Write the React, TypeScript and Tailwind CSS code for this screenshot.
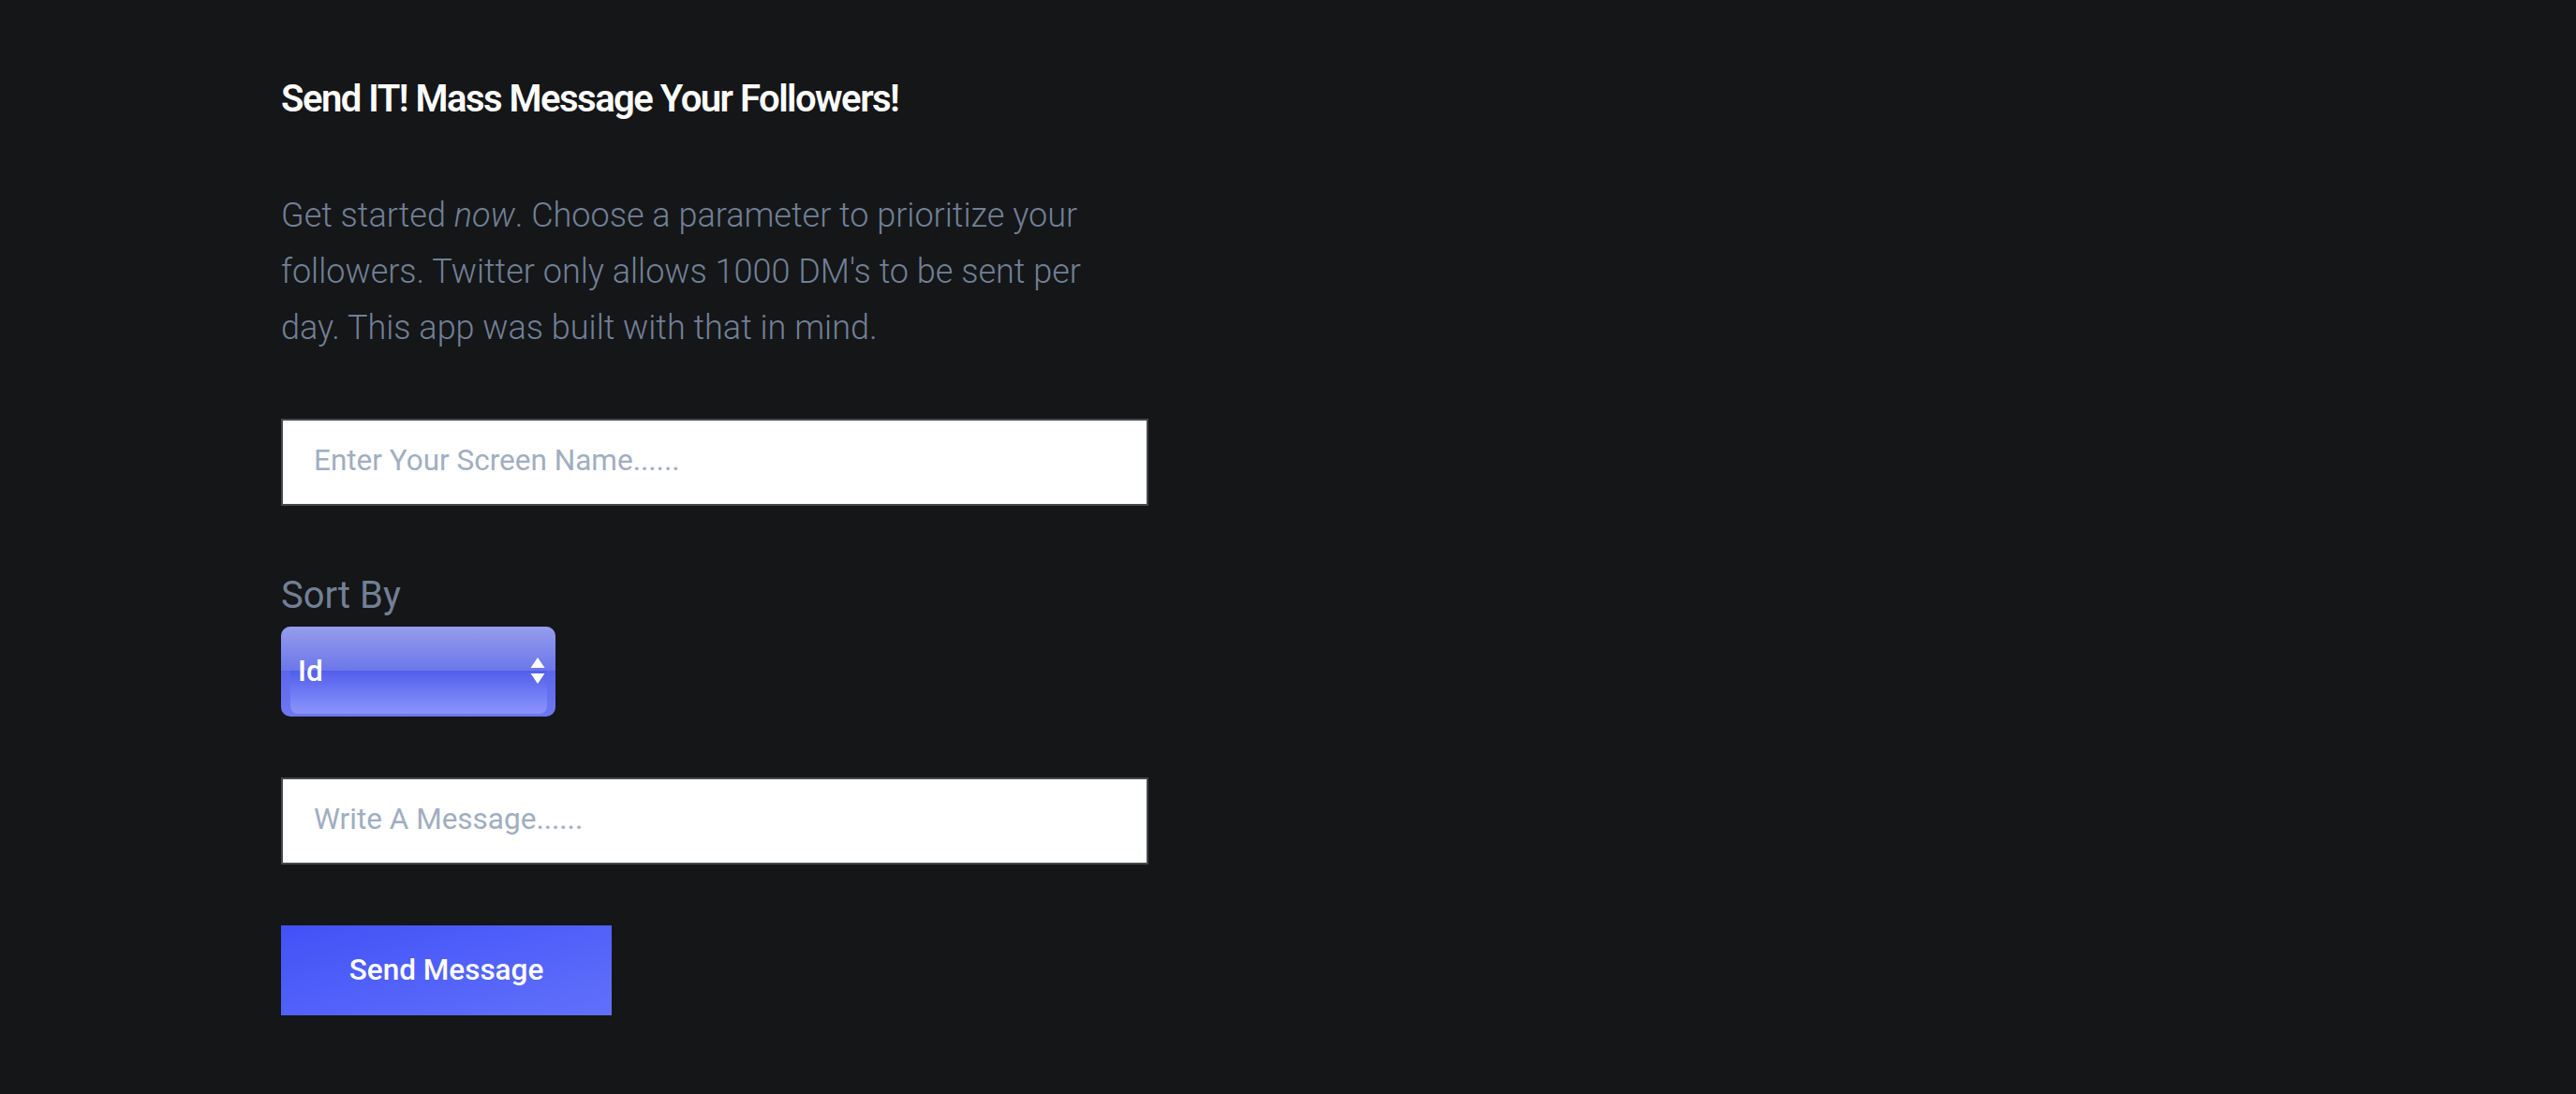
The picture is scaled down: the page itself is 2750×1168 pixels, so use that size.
import React from 'react';

const SortSelect: React.FC = () => {
  return (
    <div className="relative mt-[11px] w-[293px] h-[96px] rounded-[10px] overflow-hidden bg-gradient-to-b from-[#4a54e6] to-[#6f78f2]">
      <div className="absolute inset-x-0 top-0 h-[47px] bg-gradient-to-b from-[#969dec] to-[#6c76ea]"></div>
      <div className="absolute left-[10px] right-[9px] top-[47px] bottom-[3px] rounded-b-[8px] bg-gradient-to-b from-[#535eea] to-[#8c94fc]"></div>
      <div className="relative flex items-center justify-between h-full pl-[18px] pr-[11px]">
        <span className="text-[31.5px] font-medium text-white leading-none">Id</span>
        <svg width="16" height="28" viewBox="0 0 16 28" className="mb-[2px]">
          <polygon points="8,0 15.5,11 0.5,11" fill="#fff" />
          <polygon points="0.5,17 15.5,17 8,28" fill="#fff" />
        </svg>
      </div>
    </div>
  );
};

const TextField: React.FC<{ placeholder: string; className?: string }> = ({ placeholder, className }) => {
  return (
    <input
      type="text"
      placeholder={placeholder}
      className={`block w-[926px] h-[93px] bg-white border-2 border-[#434a4c] px-[33px] pb-[4px] text-[31.5px] text-[#2d3748] placeholder:text-[#a0aec0] outline-none ${className ?? ''}`}
      style={{ fontFamily: 'Roboto, "Liberation Sans", sans-serif' }}
    />
  );
};

export default function App() {
  return (
    <div
      className="min-h-screen bg-[#151618] pl-[300px] pt-[85px]"
      style={{ fontFamily: 'Roboto, "Liberation Sans", sans-serif' }}
    >
      <h1 className="text-[40px] leading-[42px] font-semibold tracking-[-1.5px] text-white">
        Send IT! Mass Message Your Followers!
      </h1>
      <p className="mt-[73px] w-[900px] text-[36px] leading-[60px] font-light text-[#718096]">
        Get started <em>now</em>. Choose a parameter to prioritize your followers. Twitter only allows 1000 DM's to be sent per day. This app was built with that in mind.
      </p>
      <TextField placeholder="Enter Your Screen Name......" className="mt-[67px]" />
      <div className="mt-[73px] text-[40px] leading-[45px] text-[#718096]">Sort By</div>
      <SortSelect />
      <TextField placeholder="Write A Message......" className="mt-[65px]" />
      <button className="mt-[65px] w-[353px] h-[96px] bg-gradient-to-br from-[#4251f7] to-[#6170fb] text-white text-[31.5px] font-medium">
        Send Message
      </button>
    </div>
  );
}
